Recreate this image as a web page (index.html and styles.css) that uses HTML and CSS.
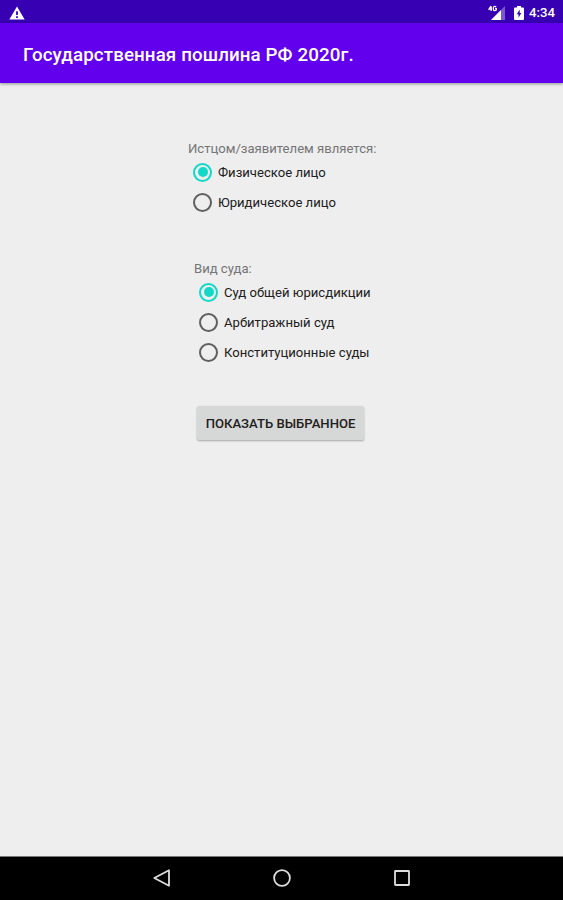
FILE: index.html
```html
<!DOCTYPE html>
<html lang="ru">
<head>
<meta charset="utf-8">
<title>Государственная пошлина РФ 2020г.</title>
<link rel="stylesheet" href="styles.css">
</head>
<body>
<div class="screen">
  <div class="status">
    <svg class="warning" width="16" height="14" viewBox="0 0 16 14"><path fill="#fff" fill-rule="evenodd" d="M8 0.5 15.700 13.500H0.300ZM7.100 5.200V9h1.800V5.200ZM7.100 10.200v1.800h1.800v-1.800Z"/></svg>
    <svg class="signal" width="18" height="16" viewBox="0 0 18 16"><path fill="#fff" opacity=".35" d="M17 1V15H3Z"/><path fill="#fff" d="M13 5V15H3Z"/><path fill="none" stroke="#fff" stroke-width="1.300" d="M3 1 .9 4.200H4M3.200 1.500V6M8.300 2Q5.300 .3 5.300 3.500T8.300 5V3.600H7"/></svg>
    <svg class="battery" width="10" height="14" viewBox="0 0 10 14"><path fill="#fff" fill-rule="evenodd" d="M3 0h4v1.400h2q1 0 1 1V13q0 1-1 1H1q-1 0-1-1V2.400q0-1 1-1h2ZM5.700 3.500 2.800 8.200h1.700v3.600L7.300 7H5.700Z"/></svg>
    <span class="clock">4:34</span>
  </div>
  <header class="appbar"><h1>Государственная пошлина РФ 2020г.</h1></header>
  <main class="content">
    <section class="group plaintiff">
      <div class="label">Истцом/заявителем является:</div>
      <div class="option"><i class="radio on"></i><span>Физическое лицо</span></div>
      <div class="option"><i class="radio"></i><span>Юридическое лицо</span></div>
    </section>
    <section class="group court">
      <div class="label">Вид суда:</div>
      <div class="option"><i class="radio on"></i><span>Суд общей юрисдикции</span></div>
      <div class="option"><i class="radio"></i><span>Арбитражный суд</span></div>
      <div class="option"><i class="radio"></i><span>Конституционные суды</span></div>
    </section>
    <button class="show">ПОКАЗАТЬ ВЫБРАННОЕ</button>
  </main>
  <nav class="navbar">
    <svg width="20" height="20" viewBox="0 0 20 20"><path d="M17 2.300V17.700L2.300 10Z"/></svg>
    <svg width="20" height="20" viewBox="0 0 20 20"><circle cx="10" cy="10" r="7.900"/></svg>
    <svg width="20" height="20" viewBox="0 0 20 20"><rect x="3" y="3" width="14" height="14" rx=".5"/></svg>
  </nav>
</div>
</body>
</html>
```
FILE: styles.css
```css
* { box-sizing: border-box; }
body { margin: 0; font-family: Roboto, "Liberation Sans", sans-serif; }
.screen { width: 563px; height: 900px; display: flex; flex-direction: column; background: #eee; overflow: hidden; }
.status { height: 23px; flex: none; background: #3700b3; display: flex; align-items: center; padding: 2px 8px 0 9px; color: #fff; }
.signal { margin-left: auto; }
.battery { margin-left: 8px; }
.clock { margin-left: 5px; width: 26px; font-size: 13.200px; font-weight: 500; white-space: nowrap; }
.appbar { height: 60px; flex: none; background: #6200ee; display: flex; align-items: center; padding: 5px 23px 0; color: #fff; box-shadow: 0 1px 3px rgba(0,0,0,.4); }
h1 { margin: 0; font-size: 18.750px; line-height: 25px; letter-spacing: .1px; font-weight: 500; white-space: nowrap; }
.content { flex: 1; display: flex; flex-direction: column; align-items: flex-start; }
.group { white-space: nowrap; font-size: 13.100px; color: #202020; }
.plaintiff { margin: 57px 0 0 188px; }
.court { margin: 43px 0 0 194px; }
.label { height: 17px; line-height: 18px; color: #757575; }
.option { height: 30px; display: flex; align-items: center; padding-left: 5px; gap: 6px; }
.radio { width: 19px; height: 19px; border: 2px solid #606060; border-radius: 50%; display: grid; place-items: center; }
.radio.on { border-color: #12d8c8; }
.radio.on::after { content: ""; width: 10px; height: 10px; border-radius: 50%; background: #12d8c8; }
.show { margin: 39px 0 0 197px; width: 167px; height: 34px; padding: 0; border: 0; border-radius: 2px; background: #d6d7d7; box-shadow: 0 1px 2px rgba(0,0,0,.3); font: 500 13.100px Roboto, sans-serif; color: #202020; white-space: nowrap; }
.navbar { height: 44px; flex: none; background: #000; border-top: 1px solid #777; display: flex; justify-content: center; align-items: center; gap: 100px; padding-bottom: 2px; }
.navbar svg { fill: none; stroke: #ddd; stroke-width: 1.800; stroke-linejoin: round; }
```
